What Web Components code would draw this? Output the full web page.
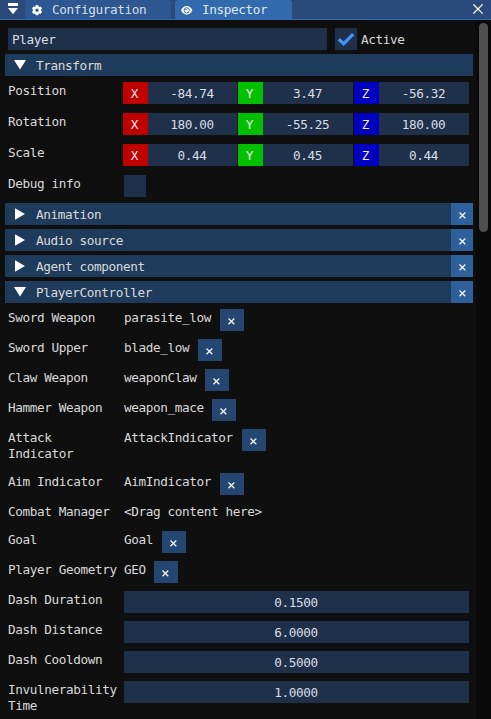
<!DOCTYPE html>
<html lang="en"><head><meta charset="utf-8"><title>Inspector</title>
<style>
body{margin:0;background:#0f0f0f;overflow:hidden}
</style></head><body>
<inspector-window></inspector-window>
<script>
const define=(name,html)=>customElements.define(name,class extends HTMLElement{
  connectedCallback(){
    if(this.shadowRoot)return;
    const t=document.createElement('template');
    t.innerHTML='<style>*{box-sizing:border-box}:host{box-sizing:border-box}</style>'+(typeof html==='function'?html(this):html);
    this.attachShadow({mode:'open'}).append(t.content.cloneNode(true));
  }
});

define('ui-cross',`<style>:host{display:block;width:7px;height:7px}svg{display:block}</style>
<svg width="7" height="7" viewBox="0 0 7 7"><path d="M.5.5 6.3 6.3M6.3.5.5 6.3" stroke="#f2f5f8" stroke-width="1.3"/></svg>`);

define('ui-field',`<style>:host{display:flex;justify-content:center;height:22px;background:#1f304b;line-height:16px;padding:4px 1px 0 0;color:#d9dee5}
:host([left]){justify-content:flex-start;padding-left:4px}</style><slot></slot>`);

define('ui-check',el=>`<style>:host{display:block;width:22px;height:22px;background:#1f304b}svg{display:block}</style>
${el.hasAttribute('checked')?'<svg width="22" height="22" viewBox="0 0 22 22"><path d="M3.8 11.3 8.7 15.7 18.2 6.2" fill="none" stroke="#4296fa" stroke-width="3.2"/></svg>':''}`);

define('ui-tab',`<style>:host{display:flex;height:19px;border-radius:3px 3px 0 0;background:#2d5791;padding-left:6px;align-items:flex-start;line-height:16px;color:#d5dfeb}
:host([active]){background:#336aad;color:#dde8f4}.i{width:21px;height:19px;flex:none}span{padding-top:2px}</style><div class="i"><slot name="icon"></slot></div><span><slot></slot></span>`);

define('ui-header',el=>`<style>:host{display:flex;height:22px;width:468px;margin:0 0 4px 5px;background:#1f3b5b;line-height:16px}
svg{width:31px;height:22px;flex:none}span{flex:1;padding-top:4px}.x{width:22px;background:#2e609b;padding:9px 0 0 8px}</style>
<svg viewBox="0 0 31 22"><path fill="#fff" d="${el.hasAttribute('open')?'M9 6H21L15 15.5Z':'M10 5.2V16.8L20 11Z'}"/></svg><span><slot></slot></span>
${el.hasAttribute('fixed')?'':'<div class="x"><ui-cross></ui-cross></div>'}`);

define('ui-row',`<style>:host{display:grid;grid-template-columns:116px 345px;margin-left:8px;min-height:30px;line-height:16px;align-items:start}
.l{padding-top:1px;white-space:pre-line}</style><div class="l"><slot name="label"></slot></div><div><slot></slot></div>`);

define('ui-ref',el=>`<style>:host{display:flex;gap:8px;white-space:nowrap}span{padding-top:1px;width:${el.getAttribute('w')||'auto'}}.x{width:24px;height:22px;background:#244670;padding:9px 0 0 8px}</style>
<span><slot></slot></span>${el.hasAttribute('empty')?'':'<div class="x"><ui-cross></ui-cross></div>'}`);

define('ui-vector',el=>{const v=el.getAttribute('values').split(' ');
return `<style>:host{display:flex;margin-left:-1px;width:346px}
div{display:flex;flex:none;width:114px;margin-right:1px}div+div{width:115px}div:last-child{margin-right:0}
b{font-weight:400;width:25px;height:22px;line-height:16px;padding:4px 2px 0 0;text-align:center;color:#f3e9e9}ui-field{flex:1}
.x{background:#c00000}.y{background:#00c000}.z{background:#0000c0}</style>
<div><b class="x">X</b><ui-field>${v[0]}</ui-field></div><div><b class="y">Y</b><ui-field>${v[1]}</ui-field></div><div><b class="z">Z</b><ui-field>${v[2]}</ui-field></div>`});

const ref=(l,v,w)=>`<ui-row><span slot="label">${l}</span><ui-ref w="${w}px">${v}</ui-ref></ui-row>`;
const num=(l,v)=>`<ui-row><span slot="label">${l}</span><ui-field>${v}</ui-field></ui-row>`;
const vec=(l,v)=>`<ui-row class="v"><span slot="label">${l}</span><ui-vector values="${v}"></ui-vector></ui-row>`;

define('inspector-window',`<style>
:host{display:flex;flex-direction:column;width:491px;height:719px;overflow:hidden;background:#0f0f0f;color:#dadada;font:12.7px/16px "DejaVu Sans Mono",monospace;letter-spacing:-.385px}
.bar{display:flex;height:20px;flex:none;background:#294a7a;border-bottom:1px solid #336aad}
.bar svg{display:block}.menu{width:25px}.close{margin-left:auto}
.body{flex:1;display:grid;grid-template-columns:476px 15px;min-height:0}
.track{background:#0a0a0a;padding:3px 3px 0}.thumb{width:9px;height:209px;border-radius:4.5px;background:#4f4f4f}
.name{display:flex;padding:8px 0 4px 8px}.name ui-field{width:319px;margin-right:8px}.name span{padding:4px 0 0 4px}
.v{min-height:31px}.transform{padding-top:2px;height:123px}.props{padding-top:2px}
</style>
<div class="bar"><svg class="menu" width="25" height="19"><path fill="#fff" d="M8 3H18V6H8ZM8 8H18L13 14.3Z"/></svg>
<ui-tab style="width:146px;margin-right:4px"><svg slot="icon" width="13" height="19" viewBox="0 0 13 19"><circle cx="6" cy="10.2" r="2.9" fill="none" stroke="#fff" stroke-width="2.5"/><path d="M6 5.1V7.2M6 13.2V15.3M1.6 7.65 3.5 8.75M8.5 11.65 10.4 12.75M1.6 12.75 3.5 11.65M8.5 8.75 10.4 7.65" stroke="#fff" stroke-width="2.6"/></svg>Configuration</ui-tab>
<ui-tab active style="width:117px"><svg slot="icon" width="13" height="19" viewBox="0 0 13 19"><path fill="#fff" d="M0 10.3C2.6 4.5 8.8 4.5 11.4 10.3C8.8 16.1 2.6 16.1 0 10.3Z"/><circle cx="5.7" cy="10.3" r="2.6" fill="none" stroke="#336aad" stroke-width=".9"/><circle cx="5" cy="9.5" r=".8" fill="#336aad"/></svg>Inspector</ui-tab>
<svg class="close" width="18" height="19"><path d="M.4 4.4 9.6 13.6M9.6 4.4.4 13.6" stroke="#fff" stroke-width="1.3"/></svg></div>
<div class="body"><div>
<div class="name"><ui-field left>Player</ui-field><ui-check checked></ui-check><span>Active</span></div>
<ui-header open fixed>Transform</ui-header>
<div class="transform">${vec('Position','-84.74 3.47 -56.32')}${vec('Rotation','180.00 -55.25 180.00')}${vec('Scale','0.44 0.45 0.44')}
<ui-row><span slot="label">Debug info</span><ui-check></ui-check></ui-row></div>
<ui-header>Animation</ui-header><ui-header>Audio source</ui-header><ui-header>Agent component</ui-header><ui-header open>PlayerController</ui-header>
<div class="props">${ref('Sword Weapon','parasite_low',88)}${ref('Sword Upper','blade_low',66)}${ref('Claw Weapon','weaponClaw',73)}${ref('Hammer Weapon','weapon_mace',80)}
<ui-row style="min-height:44px"><span slot="label">Attack<br>Indicator</span><ui-ref w="110px">AttackIndicator</ui-ref></ui-row>
${ref('Aim Indicator','AimIndicator',88)}
<ui-row style="min-height:28px"><span slot="label">Combat Manager</span><ui-ref empty>&lt;Drag content here&gt;</ui-ref></ui-row>
${ref('Goal','Goal',30)}${ref('Player Geometry','GEO',22)}${num('Dash Duration','0.1500')}${num('Dash Distance','6.0000')}${num('Dash Cooldown','0.5000')}${num('Invulnerability<br>Time','1.0000')}</div>
</div><div class="track"><div class="thumb"></div></div></div>`);
</script></body></html>
